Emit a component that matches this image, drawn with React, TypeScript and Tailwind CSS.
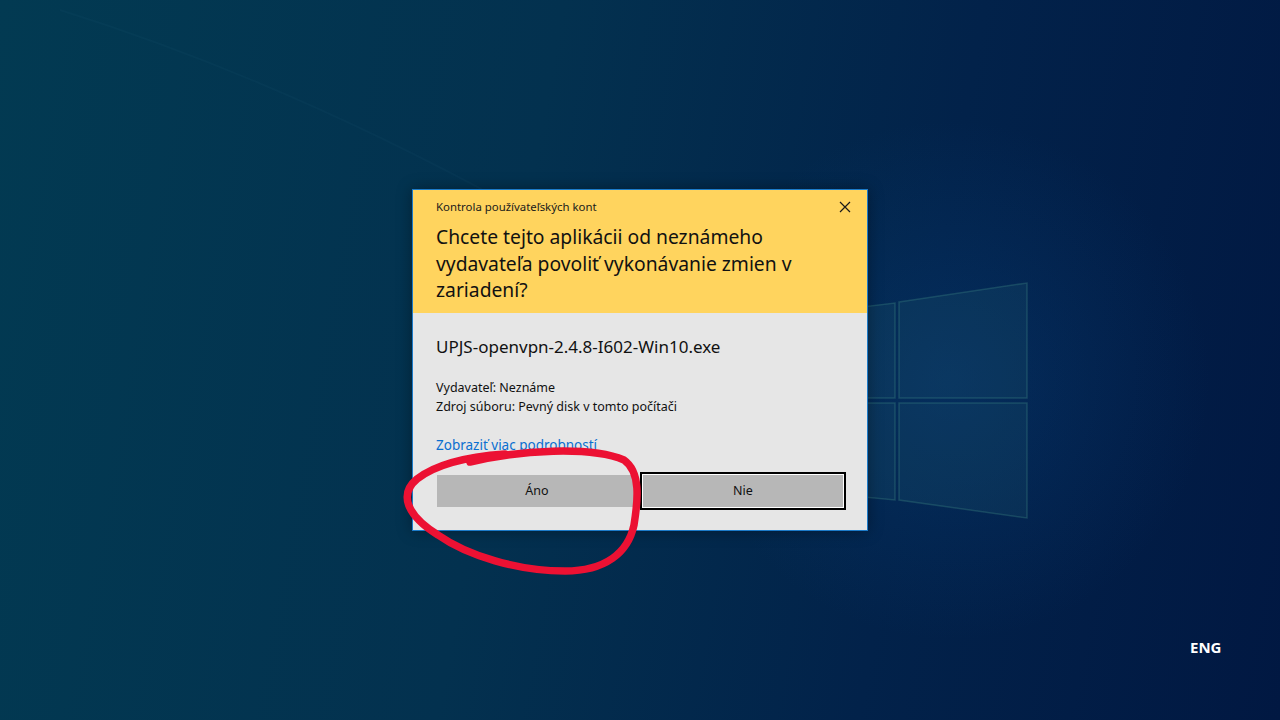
import React from "react";

const font = { fontFamily: '"Segoe UI", "Noto Sans", "Open Sans", sans-serif' };

function Wallpaper() {
  // faint windows logo + light streaks behind the dialog
  return (
    <svg className="absolute inset-0 h-full w-full" viewBox="0 0 1280 720" aria-hidden>
      <defs>
        <radialGradient id="glow" cx="950" cy="380" r="260" gradientUnits="userSpaceOnUse">
          <stop offset="0" stopColor="#0a4a8a" stopOpacity="0.3" />
          <stop offset="1" stopColor="#0a4a8a" stopOpacity="0" />
        </radialGradient>
      </defs>
      <rect x="0" y="0" width="1280" height="720" fill="url(#glow)" />
      <path d="M 60 10 Q 380 110 720 330" stroke="#6fb0c8" strokeOpacity="0.035" strokeWidth="2" fill="none" />
      <g fill="#2f7a80" fillOpacity="0.14" stroke="#4a9a8c" strokeOpacity="0.28" strokeWidth="1.5">
        <polygon points="770,318 895,303 895,398 770,398" />
        <polygon points="899,302 1027,283 1027,398 899,398" />
        <polygon points="770,403 895,403 895,500 770,488" />
        <polygon points="899,403 1027,403 1027,518 899,500" />
      </g>
    </svg>
  );
}

function CloseIcon() {
  return (
    <svg width="12" height="12" viewBox="0 0 12 12">
      <path d="M1 1 L11 11 M11 1 L1 11" stroke="#1a1a1a" strokeWidth="1.2" />
    </svg>
  );
}

export default function App() {
  return (
    <div
      className="relative h-[720px] w-[1280px] overflow-hidden bg-[linear-gradient(100deg,#023a52_0%,#03314f_40%,#02224a_70%,#011842_100%)]"
      style={font}
    >
      <Wallpaper />

      <div className="relative flex h-full items-center justify-center">
        <div className="w-[456px] border border-[#1c7bc9] bg-[#e6e6e6] shadow-[0_0_14px_rgba(0,0,0,0.35)]">
          <div className="h-[123px] bg-[#ffd45e] px-[23px] pt-[8px]">
            <div className="flex h-[17px] items-center justify-between">
              <span className="text-[11.4px] text-[#1a1a1a]">Kontrola používateľských kont</span>
              <span className="-mr-[7px]">
                <CloseIcon />
              </span>
            </div>
            <p className="mt-[9px] text-[19.3px] leading-[26.5px] text-[#111]">
              Chcete tejto aplikácii od neznámeho vydavateľa povoliť vykonávanie zmien v zariadení?
            </p>
          </div>

          <div className="px-[23px] pb-[23px] pt-[23px]">
            <p className="h-[22px] text-[17px] leading-[22px] text-[#111]">UPJS-openvpn-2.4.8-I602-Win10.exe</p>
            <div className="mt-[20px] text-[12.5px] leading-[19px] text-[#111]">
              <p>Vydavateľ: Neznáme</p>
              <p>Zdroj súboru: Pevný disk v tomto počítači</p>
            </div>
            <p className="mt-[20px] text-[13.5px] leading-[19px] text-[#0a6fd0]">Zobraziť viac podrobností</p>
            <div className="mt-[20px] flex gap-[6px] pl-[1px]">
              <button className="h-[32px] w-[200px] bg-[#b7b7b7] text-[12.5px] text-[#111]">Áno</button>
              <button className="h-[32px] w-[200px] bg-[#b7b7b7] text-[12.5px] text-[#111] ring-2 ring-black ring-offset-1 ring-offset-white">
                Nie
              </button>
            </div>
          </div>
        </div>
      </div>

      {/* red marker scribble drawn over the "Áno" button */}
      <svg className="pointer-events-none absolute inset-0 h-full w-full" viewBox="0 0 1280 720" aria-hidden>
        <path
          d="M 470 462 C 520 450, 590 446, 624 460 C 641 472, 638 500, 634 525 C 628 553, 605 571, 565 571 C 518 571, 468 556, 438 535 C 406 515, 399 494, 417 479 C 435 465, 462 457, 505 454"
          stroke="#ec1133"
          strokeWidth="7.5"
          strokeLinecap="round"
          fill="none"
        />
      </svg>

      <span className="absolute left-[1190px] top-[636px] text-[15px] font-bold text-white">ENG</span>
    </div>
  );
}
